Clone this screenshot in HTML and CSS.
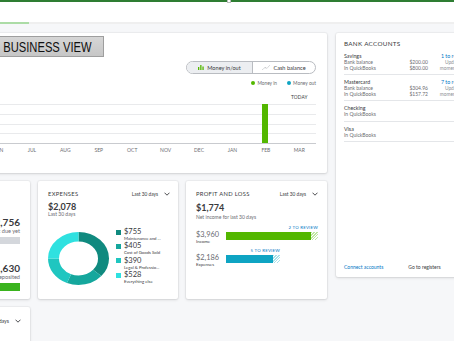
FILE: index.html
```html
<!DOCTYPE html>
<html>
<head>
<meta charset="utf-8">
<link rel="stylesheet" href="styles.css">
</head>
<body>
<div class="topline"><span class="notch"></span></div>
<div class="header"></div>
<div class="tabs"><div class="tab-active"></div></div>

<div class="main">
  <section class="card chart-card">
    <div class="chart-top">
      <div class="toggle">
        <span class="seg seg-on">
          <svg class="ico" width="6" height="5" viewBox="0 0 6 5"><rect x="0" y="2" width="1.3" height="3" fill="#53b700"/><rect x="2.2" y="0" width="1.3" height="5" fill="#53b700"/><rect x="4.4" y="1.5" width="1.3" height="3.5" fill="#53b700"/></svg>
          Money in/out
        </span>
        <span class="seg">
          <svg class="ico" width="8" height="5" viewBox="0 0 8 5"><polyline points="0.5,4.5 3,2.5 5,3.3 7.5,0.5" fill="none" stroke="#8d9096" stroke-width="0.7" stroke-dasharray="1 0.7"/></svg>
          Cash balance
        </span>
      </div>
    </div>
    <div class="legend">
      <span class="dot dot-in"></span><span class="lg-txt">Money in</span>
      <span class="dot dot-out"></span><span class="lg-txt">Money out</span>
    </div>
    <div class="cols today-row">
      <span></span><span></span><span></span><span></span><span></span><span></span>
      <span></span><span></span><span></span><span></span><span></span><span>TODAY</span>
    </div>
    <div class="cols plot">
      <span></span><span></span><span></span><span></span><span></span><span></span>
      <span></span><span></span><span></span><span></span><span class="barcell"><i class="bar"></i></span><span></span>
    </div>
    <div class="cols months">
      <span>APR</span><span>MAY</span><span>JUN</span><span>JUL</span><span>AUG</span><span>SEP</span>
      <span>OCT</span><span>NOV</span><span>DEC</span><span>JAN</span><span>FEB</span><span>MAR</span>
    </div>
  </section>

  <section class="card bank-card">
    <div class="bank-title">BANK ACCOUNTS</div>
    <div class="acct">
      <div class="arow name"><span>Savings</span><span></span><span class="link">1 to review</span></div>
      <div class="arow"><span>Bank balance</span><span class="amt">$200.00</span><span class="upd">Updated</span></div>
      <div class="arow"><span>In QuickBooks</span><span class="amt">$800.00</span><span class="upd">moments ago</span></div>
    </div>
    <div class="acct">
      <div class="arow name"><span>Mastercard</span><span></span><span class="link">7 to review</span></div>
      <div class="arow"><span>Bank balance</span><span class="amt">$304.96</span><span class="upd">Updated</span></div>
      <div class="arow"><span>In QuickBooks</span><span class="amt">$157.72</span><span class="upd">moments ago</span></div>
    </div>
    <div class="acct">
      <div class="arow name"><span>Checking</span></div>
      <div class="arow"><span>In QuickBooks</span></div>
    </div>
    <div class="acct">
      <div class="arow name"><span>Visa</span></div>
      <div class="arow"><span>In QuickBooks</span></div>
    </div>
    <div class="bank-foot">
      <span class="link">Connect accounts</span>
      <span>Go to registers</span>
    </div>
  </section>

  <section class="card inv-card">
    <div class="card-head"><span class="card-title">INVOICES</span></div>
    <div class="inv-line"><b>$3,886</b> Unpaid last 365 days</div>
    <div class="inv-row r1">
      <div><div class="big">$1,130</div><div class="sub">Overdue</div></div>
      <div class="right"><div class="big">$2,756</div><div class="sub">Not due yet</div></div>
    </div>
    <div class="inv-bar"><i class="ov"></i><i class="nd"></i></div>
    <div class="inv-row r2">
      <div><div class="big">$0</div><div class="sub">Not deposited</div></div>
      <div class="right"><div class="big">$1,630</div><div class="sub">Deposited</div></div>
    </div>
    <div class="inv-bar green"></div>
  </section>

  <section class="card exp-card">
    <div class="card-head">
      <span class="card-title">EXPENSES</span>
      <span class="period">Last 30 days <svg class="chev" width="6" height="4" viewBox="0 0 6 4"><polyline points="0.5,0.7 3,3.2 5.5,0.7" fill="none" stroke="#393a3d" stroke-width="0.9"/></svg></span>
    </div>
    <div class="big">$2,078</div>
    <div class="sub">Last 30 days</div>
    <div class="exp-body">
      <svg class="donut" width="61" height="53" viewBox="0 0 100 100" preserveAspectRatio="none">
        <g transform="rotate(-90 50 50)" fill="none" stroke-width="18">
          <circle cx="50" cy="50" r="41" stroke="#108a7f" stroke-dasharray="93.6 164" stroke-dashoffset="0"/>
          <circle cx="50" cy="50" r="41" stroke="#15a79d" stroke-dasharray="50.2 207.4" stroke-dashoffset="-93.6"/>
          <circle cx="50" cy="50" r="41" stroke="#1fc6c0" stroke-dasharray="48.3 209.3" stroke-dashoffset="-143.8"/>
          <circle cx="50" cy="50" r="41" stroke="#2fe1e0" stroke-dasharray="65.5 192.1" stroke-dashoffset="-192.1"/>
        </g>
      </svg>
      <ul class="exp-legend">
        <li><i class="sq c1"></i><div><div class="amt">$755</div><div class="lbl">Maintenance and ...</div></div></li>
        <li><i class="sq c2"></i><div><div class="amt">$405</div><div class="lbl">Cost of Goods Sold</div></div></li>
        <li><i class="sq c3"></i><div><div class="amt">$390</div><div class="lbl">Legal &amp; Professio...</div></div></li>
        <li><i class="sq c4"></i><div><div class="amt">$528</div><div class="lbl">Everything else</div></div></li>
      </ul>
    </div>
  </section>

  <section class="card pl-card">
    <div class="card-head">
      <span class="card-title">PROFIT AND LOSS</span>
      <span class="period">Last 30 days <svg class="chev" width="6" height="4" viewBox="0 0 6 4"><polyline points="0.5,0.7 3,3.2 5.5,0.7" fill="none" stroke="#393a3d" stroke-width="0.9"/></svg></span>
    </div>
    <div class="big">$1,774</div>
    <div class="sub">Net income for last 30 days</div>
    <div class="pl-block">
      <div class="review" style="width:92px">2 TO REVIEW</div>
      <div class="pl-row">
        <div><div class="pl-amt">$3,960</div><div class="pl-lbl">Income</div></div>
        <div class="pl-bar" style="width:92px"><i class="fill inc"></i><i class="hatch h-inc"></i></div>
      </div>
      <div class="review r2" style="width:54px">5 TO REVIEW</div>
      <div class="pl-row">
        <div><div class="pl-amt">$2,186</div><div class="pl-lbl">Expenses</div></div>
        <div class="pl-bar" style="width:54px"><i class="fill exp"></i><i class="hatch h-exp"></i></div>
      </div>
    </div>
  </section>

  <section class="card bottom-card">
    <div class="card-head">
      <span class="card-title">SALES</span>
      <span class="period">Last 30 days <svg class="chev" width="6" height="4" viewBox="0 0 6 4"><polyline points="0.5,0.7 3,3.2 5.5,0.7" fill="none" stroke="#393a3d" stroke-width="0.9"/></svg></span>
    </div>
  </section>
</div>

<div class="bv-label"><span>BUSINESS VIEW</span></div>
</body>
</html>
```

FILE: styles.css
```css
* { box-sizing: border-box; }
html, body { margin: 0; padding: 0; }
body {
  width: 454px;
  height: 341px;
  overflow: hidden;
  background: #f6f7f9;
  font-family: Lato, "Open Sans", sans-serif;
  color: #393a3d;
  position: relative;
}

.topline { height: 2px; background: #2e7d32; position: relative; }
.notch {
  position: absolute; left: 227px; top: 0;
  width: 4px; height: 3px; background: #fff; border: 1px solid #bbb; border-top: 0;
}
.header { height: 20px; background: #fff; }
.tabs { height: 2px; background: #efefef; }
.tab-active { width: 29px; height: 2px; background: #acdca6; }

.main {
  display: grid;
  grid-template-columns: 140px 140px 141px 140px;
  grid-template-rows: 140px 118px 60px;
  column-gap: 8px;
  row-gap: 8px;
  margin-left: -110px;
  padding-top: 9px;
}
.card {
  background: #fff;
  border-radius: 2px;
  box-shadow: 0 0 0 1px rgba(0,0,0,0.03), 0 1px 3px rgba(0,0,0,0.13);
}

/* chart card */
.chart-card {
  grid-column: 1 / 4;
  grid-row: 1;
  padding: 28px 11px 0 25px;
}
.chart-top { display: flex; justify-content: flex-end; }
.toggle {
  display: flex;
  width: 130px; height: 13px;
  border: 1px solid #b9bcc1;
  border-radius: 7px;
  overflow: hidden;
  font-size: 5.6px;
}
.seg {
  flex: 1;
  display: flex; align-items: center; justify-content: center; gap: 3px;
  color: #393a3d;
}
.seg-on { background: #eceef1; border-right: 1px solid #b9bcc1; flex: 0 0 66px; }
.ico { display: block; }
.legend {
  display: flex; justify-content: flex-end; align-items: center;
  height: 8px; margin-top: 5px;
  font-size: 4.8px; color: #6b6c72;
}
.dot { width: 4px; height: 4px; border-radius: 50%; margin-right: 2px; }
.dot-in { background: #53b700; }
.dot-out { background: #0ea4c3; margin-left: 10px; }
.cols { display: grid; grid-template-columns: repeat(12, 1fr); }
.today-row { height: 10px; margin-top: 5px; font-size: 4.8px; line-height: 10px; color: #393a3d; text-align: center; letter-spacing: 0.1px; }
.plot {
  margin-top: 2px;
  height: 40px;
  background: repeating-linear-gradient(to bottom, #e9eaec 0, #e9eaec 1px, transparent 1px, transparent 9.75px);
  border-bottom: 1px solid #c9cbcf;
}
.barcell { display: flex; justify-content: center; align-items: flex-end; }
.bar { display: block; width: 6px; height: 39px; background: #53b700; margin-left: -2px; }
.months { margin-top: 2px; font-size: 5px; line-height: 8px; text-align: center; color: #6b6c72; }

/* bank card */
.bank-card {
  grid-column: 4;
  grid-row: 1 / 3;
  margin-left: 1px;
  height: 244px;
  padding: 7px 0 7px 8px;
  display: flex; flex-direction: column;
  font-size: 5px;
}
.bank-title { font-size: 6.3px; line-height: 8px; letter-spacing: 0.3px; color: #393a3d; margin-bottom: 1px; }
.acct { padding: 4px 0 3px; border-bottom: 1px solid #e4e6e9; }
.arow { display: grid; grid-template-columns: 60px 24px 43px; line-height: 5.5px; color: #6b6c72; }
.arow.name { line-height: 6px; margin-bottom: 1px; color: #393a3d; font-size: 5.3px; }
.amt { text-align: right; }
.upd { text-align: center; padding-left: 9px; white-space: nowrap; color: #8d9096; font-size: 4.8px; }
.arow .link { text-align: center; padding-left: 9px; white-space: nowrap; }
.link { color: #0077c5; }
.bank-foot {
  margin-top: auto;
  display: flex; gap: 25px;
  font-size: 5px; line-height: 6px; color: #393a3d;
}

/* small cards common */
.card-head {
  display: flex; justify-content: space-between; align-items: center;
  height: 7px;
}
.card-title { font-size: 5.8px; letter-spacing: 0.3px; color: #393a3d; }
.period { display: flex; align-items: center; gap: 6px; font-size: 4.8px; color: #393a3d; }
.chev { display: block; }
.big { font-size: 9px; font-weight: 700; line-height: 9px; color: #393a3d; }
.sub { font-size: 5px; line-height: 6px; color: #6b6c72; }

/* invoices partial */
.inv-card { grid-column: 1; grid-row: 2; padding: 9px 10px 0 10px; }
.inv-line { font-size: 5px; line-height: 6px; margin-top: 4px; color: #6b6c72; }
.inv-row { display: flex; justify-content: space-between; }
.inv-row .right { text-align: right; }
.inv-row.r1 { margin-top: 11px; }
.inv-row .big { font-size: 10px; }
.inv-row .sub { margin-top: 1px; font-size: 5.6px; }
.inv-bar { display: flex; height: 7px; margin-top: 3px; }
.inv-bar .ov { display: block; width: 40px; background: #ff8000; }
.inv-bar .nd { display: block; flex: 1; background: #d4d7dc; }
.inv-row.r2 { margin-top: 20px; }
.inv-bar.green { background: #3ab31e; height: 8px; }

/* expenses */
.exp-card { grid-column: 2; grid-row: 2; padding: 9px 8px 0 10px; }
.exp-card .big { margin-top: 5px; }
.exp-body { display: flex; gap: 7px; margin-top: 11px; }
.donut { display: block; margin-top: 4px; }
.exp-legend { list-style: none; margin: 0; padding: 0; }
.exp-legend li { display: flex; gap: 3px; height: 14.4px; }
.sq { display: block; width: 5px; height: 5px; margin-top: 1.5px; }
.c1 { background: #108a7f; }
.c2 { background: #15a79d; }
.c3 { background: #1fc6c0; }
.c4 { background: #2fe1e0; }
.exp-legend .amt { font-size: 7.5px; line-height: 8px; color: #393a3d; text-align: left; }
.exp-legend .lbl { font-size: 4.3px; line-height: 5px; color: #393a3d; white-space: nowrap; }

/* profit and loss */
.pl-card { grid-column: 3; grid-row: 2; padding: 9px 9px 0 10px; }
.pl-card .big { margin-top: 6px; }
.pl-card .sub { margin-top: 2px; }
.pl-block { margin-top: 5px; }
.review { margin-left: 30px; text-align: right; font-size: 4.4px; line-height: 6px; color: #0077c5; letter-spacing: 0.2px; white-space: nowrap; }
.review.r2 { margin-top: 3px; }
.pl-row { display: grid; grid-template-columns: 30px 1fr; }
.pl-amt { font-size: 7.4px; line-height: 8px; color: #6b6c72; }
.pl-lbl { font-size: 4.4px; line-height: 6px; color: #393a3d; }
.pl-bar { display: flex; height: 8px; margin-top: 1px; }
.fill { display: block; flex: 1; }
.inc { background: #53b700; }
.exp { background: #0ea4c3; }
.hatch { display: block; width: 7px; }
.h-inc { background: repeating-linear-gradient(135deg, #bfe6a0 0, #bfe6a0 1px, #ffffff 1px, #ffffff 2px); }
.h-exp { background: repeating-linear-gradient(135deg, #a9e2ea 0, #a9e2ea 1px, #ffffff 1px, #ffffff 2px); }

/* bottom partial */
.bottom-card { grid-column: 1; grid-row: 3; padding: 9px 9px 0 10px; }
.bottom-card .card-head { margin-top: 1px; }
.bottom-card .period { font-size: 5.2px; }

/* annotation overlay */
.bv-label {
  position: absolute; left: 0; top: 36px;
  width: 104px; height: 21px;
  background: linear-gradient(#d6d6d6, #c6c6c6);
  border: 1px solid #9e9e9e; border-left: 0;
  overflow: hidden;
}
.bv-label span {
  display: block;
  font-family: "Liberation Sans", Arial, sans-serif;
  font-size: 14px; line-height: 20px;
  color: #111;
  padding-left: 4px;
  transform: scaleX(0.8);
  transform-origin: left center;
  white-space: nowrap;
}
```
